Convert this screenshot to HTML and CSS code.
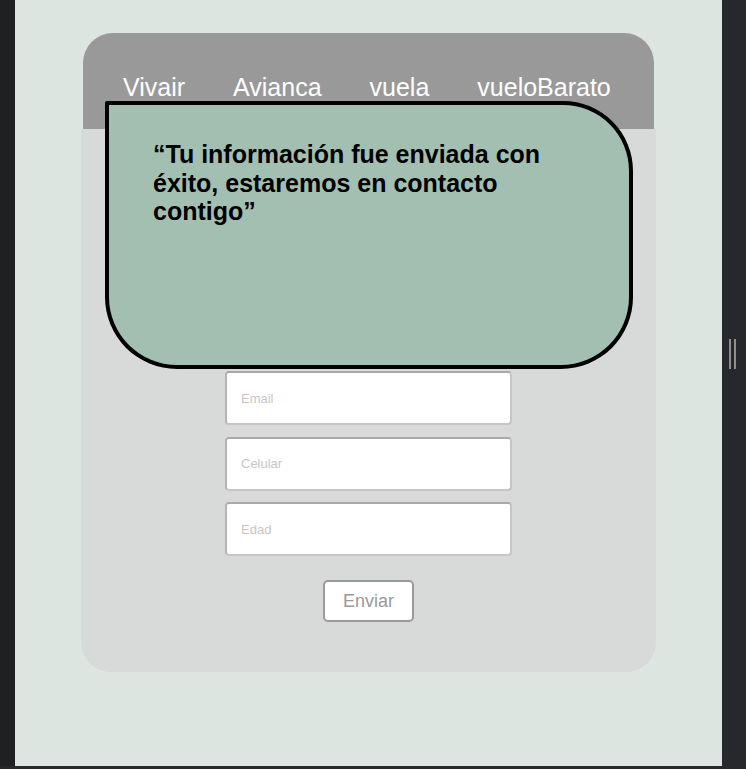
FILE: index.html
```html
<!DOCTYPE html>
<html lang="es">
<head>
<meta charset="utf-8">
<title>Vuelos</title>
<link rel="stylesheet" href="styles.css">
</head>
<body>
<div class="frame">
  <div class="side-left"></div>
  <main class="viewport">
    <div class="card">
      <header class="card-head">
        <nav class="nav">
          <a class="nav-link" href="#">Vivair</a>
          <a class="nav-link" href="#">Avianca</a>
          <a class="nav-link" href="#">vuela</a>
          <a class="nav-link" href="#">vueloBarato</a>
        </nav>
      </header>
      <section class="card-body">
        <form class="form">
          <input class="field" type="email" placeholder="Email">
          <input class="field" type="text" placeholder="Celular">
          <input class="field" type="text" placeholder="Edad">
          <button class="submit" type="button">Enviar</button>
        </form>
      </section>
      <div class="popup">
        <h2 class="popup-text">“Tu información fue enviada con éxito, estaremos en contacto contigo”</h2>
      </div>
    </div>
  </main>
  <div class="side-right"><span class="grip"></span></div>
</div>
<div class="bottom-bar"></div>
</body>
</html>
```

FILE: styles.css
```css
* { box-sizing: border-box; }
html, body { margin: 0; padding: 0; }
body {
  width: 746px;
  height: 769px;
  overflow: hidden;
  font-family: "Liberation Sans", Arial, sans-serif;
  background: #27282c;
}
.frame {
  display: flex;
  height: 766px;
}
.side-left {
  width: 15px;
  background: #1f2022;
}
.viewport {
  width: 707px;
  background: #dce5e0;
  padding-top: 33px;
}
.side-right {
  width: 24px;
  background: #27282c;
  position: relative;
}
.grip {
  position: absolute;
  left: 7px;
  top: 339px;
  width: 7px;
  height: 30px;
  border-left: 2px solid #8f8f8f;
  border-right: 2px solid #8f8f8f;
}
.bottom-bar {
  height: 3px;
  background: #27282c;
}
.card {
  position: relative;
  width: 575px;
  margin: 0 auto;
}
.card-head {
  margin: 0 2px;
  height: 96px;
  background: #999999;
  border-radius: 30px 30px 0 0;
  padding: 40px 0 0 40px;
}
.nav {
  display: flex;
  gap: 48px;
}
.nav-link {
  color: #ffffff;
  text-decoration: none;
  font-size: 25px;
  line-height: 28px;
}
.card-body {
  background: #d8d9d9;
  border-radius: 0 0 30px 30px;
  padding: 242px 0 50px;
}
.form {
  display: flex;
  flex-direction: column;
  align-items: center;
}
.field {
  width: 287px;
  height: 54px;
  margin: 0 0 11.5px;
  padding: 0 14px;
  background: #ffffff;
  border: 2px solid #c6c6c6;
  border-top-color: #a9a9a9;
  border-left-color: #b4b4b4;
  border-radius: 4px;
  font-family: "Liberation Sans", Arial, sans-serif;
  font-size: 13px;
  color: #333;
  outline: none;
}
.field::placeholder { color: #c9c4c4; }
.field:last-of-type { margin-bottom: 0; }
.submit {
  margin-top: 24px;
  width: 91px;
  height: 42px;
  background: #ffffff;
  border: 2px solid #9a9a9a;
  border-radius: 5px;
  color: #999999;
  font-family: "Liberation Sans", Arial, sans-serif;
  font-size: 18px;
  padding: 0;
}
.popup {
  position: absolute;
  left: 24px;
  top: 68px;
  width: 528px;
  height: 268px;
  background: #a3bfb1;
  border: 4px solid #000000;
  border-radius: 2px 70px 72px 72px;
  padding: 35px 40px 0 44px;
}
.popup-text {
  margin: 0;
  font-size: 25px;
  line-height: 28.5px;
  font-weight: bold;
  color: #000000;
}
```
